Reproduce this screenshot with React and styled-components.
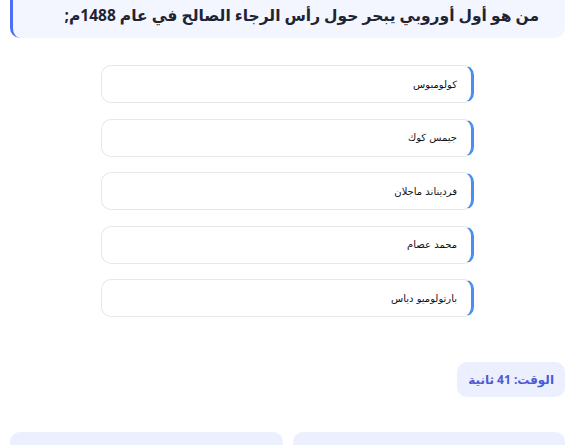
import React from "react";
import styled, { createGlobalStyle } from "styled-components";

const Global = createGlobalStyle`
  html, body { margin: 0; padding: 0; background: #fff; }
  body { font-family: "Noto Sans", "DejaVu Sans", sans-serif; overflow: hidden; }
`;

const Page = styled.div`
  direction: rtl;
  width: 580px;
  height: 445px;
  overflow: hidden;
  box-sizing: border-box;
  padding: 0 15px 0 10px;
  display: flex;
  flex-direction: column;
  & > * { flex-shrink: 0; }
`;

const Question = styled.div`
  background: #f3f6fe;
  border-left: 3px solid #4f6ef7;
  border-radius: 0 0 10px 10px;
  height: 38px;
  box-sizing: border-box;
  padding: 3px 26px 0 20px;
  font-size: 15.5px;
  font-weight: 700;
  color: #1f2433;
  line-height: 24px;
`;

const Options = styled.div`
  width: 373px;
  margin: 27px auto 0;
  display: flex;
  flex-direction: column;
  gap: 15.5px;
`;

const Option = styled.button`
  direction: rtl;
  text-align: right;
  height: 38px;
  background: #fff;
  border: 1px solid #e6e8ee;
  border-right: 3px solid #4a8ff0;
  border-radius: 10px;
  padding: 0 14px;
  font-family: "DejaVu Sans", sans-serif;
  font-size: 10px;
  color: #111;
  cursor: pointer;
`;

const TimerRow = styled.div`
  display: flex;
  margin-top: 45px;
`;

const Timer = styled.div`
  background: #eceffd;
  color: #4b5bd6;
  border-radius: 10px;
  height: 35px;
  padding: 0 11px;
  display: flex;
  align-items: center;
  font-size: 12px;
  font-weight: 700;
`;

const Bottom = styled.div`
  display: grid;
  grid-template-columns: 1fr 1fr;
  gap: 10px;
  margin-top: 35px;
`;

const Panel = styled.div`
  background: #eceffd;
  border-radius: 10px;
  height: 60px;
`;

const answers = ["كولومبوس", "جيمس كوك", "فرديناند ماجلان", "محمد عصام", "بارتولوميو دياس"];

export default function App() {
  return (
    <>
      <Global />
      <Page>
        <Question>من هو أول أوروبي يبحر حول رأس الرجاء الصالح في عام 1488م;</Question>
        <Options>
          {answers.map((a) => (
            <Option key={a}>{a}</Option>
          ))}
        </Options>
        <TimerRow>
          <Timer>الوقت: 41 ثانية</Timer>
        </TimerRow>
        <Bottom>
          <Panel />
          <Panel />
        </Bottom>
      </Page>
    </>
  );
}
